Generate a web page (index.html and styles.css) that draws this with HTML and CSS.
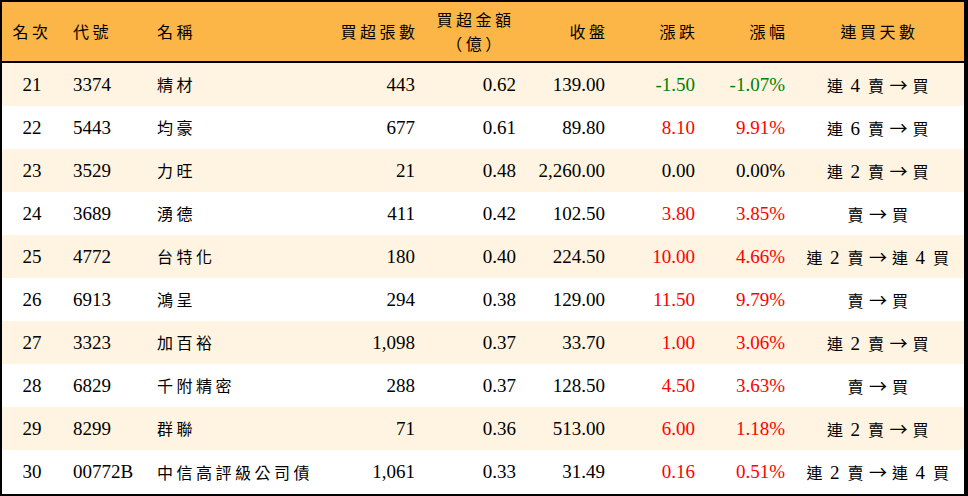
FILE: index.html
```html
<!DOCTYPE html>
<html lang="zh-Hant">
<head>
<meta charset="utf-8">
<title>買超排行</title>
<link rel="stylesheet" href="styles.css">
</head>
<body>
<table class="rank">
  <colgroup>
    <col class="w1"><col class="w2"><col class="w3"><col class="w4"><col class="w5"><col class="w6"><col class="w7"><col class="w8"><col class="w9">
  </colgroup>
  <thead>
    <tr>
      <th class="c"><span class="zh">名次</span></th>
      <th class="l"><span class="zh">代號</span></th>
      <th class="l l3"><span class="zh">名稱</span></th>
      <th class="r"><span class="zh rz">買超張數</span></th>
      <th class="c"><div class="zh ln">買超金額</div><div class="zh ln">（億）</div></th>
      <th class="r"><span class="zh rz">收盤</span></th>
      <th class="r"><span class="zh rz">漲跌</span></th>
      <th class="r"><span class="zh rz">漲幅</span></th>
      <th class="c"><span class="zh">連買天數</span></th>
    </tr>
  </thead>
  <tbody>
    <tr class="alt"><td class="c">21</td><td class="l">3374</td><td class="l l3"><span class="zh">精材</span></td><td class="r">443</td><td class="r">0.62</td><td class="r">139.00</td><td class="r dn">-1.50</td><td class="r dn">-1.07%</td><td class="c"><span class="zh">連</span><span class="n">4</span><span class="zh">賣</span><span class="ar">→</span><span class="zh">買</span></td></tr>
    <tr><td class="c">22</td><td class="l">5443</td><td class="l l3"><span class="zh">均豪</span></td><td class="r">677</td><td class="r">0.61</td><td class="r">89.80</td><td class="r up">8.10</td><td class="r up">9.91%</td><td class="c"><span class="zh">連</span><span class="n">6</span><span class="zh">賣</span><span class="ar">→</span><span class="zh">買</span></td></tr>
    <tr class="alt"><td class="c">23</td><td class="l">3529</td><td class="l l3"><span class="zh">力旺</span></td><td class="r">21</td><td class="r">0.48</td><td class="r">2,260.00</td><td class="r">0.00</td><td class="r">0.00%</td><td class="c"><span class="zh">連</span><span class="n">2</span><span class="zh">賣</span><span class="ar">→</span><span class="zh">買</span></td></tr>
    <tr><td class="c">24</td><td class="l">3689</td><td class="l l3"><span class="zh">湧德</span></td><td class="r">411</td><td class="r">0.42</td><td class="r">102.50</td><td class="r up">3.80</td><td class="r up">3.85%</td><td class="c"><span class="zh">賣</span><span class="ar">→</span><span class="zh">買</span></td></tr>
    <tr class="alt"><td class="c">25</td><td class="l">4772</td><td class="l l3"><span class="zh">台特化</span></td><td class="r">180</td><td class="r">0.40</td><td class="r">224.50</td><td class="r up">10.00</td><td class="r up">4.66%</td><td class="c"><span class="zh">連</span><span class="n">2</span><span class="zh">賣</span><span class="ar">→</span><span class="zh">連</span><span class="n">4</span><span class="zh">買</span></td></tr>
    <tr><td class="c">26</td><td class="l">6913</td><td class="l l3"><span class="zh">鴻呈</span></td><td class="r">294</td><td class="r">0.38</td><td class="r">129.00</td><td class="r up">11.50</td><td class="r up">9.79%</td><td class="c"><span class="zh">賣</span><span class="ar">→</span><span class="zh">買</span></td></tr>
    <tr class="alt"><td class="c">27</td><td class="l">3323</td><td class="l l3"><span class="zh">加百裕</span></td><td class="r">1,098</td><td class="r">0.37</td><td class="r">33.70</td><td class="r up">1.00</td><td class="r up">3.06%</td><td class="c"><span class="zh">連</span><span class="n">2</span><span class="zh">賣</span><span class="ar">→</span><span class="zh">買</span></td></tr>
    <tr><td class="c">28</td><td class="l">6829</td><td class="l l3"><span class="zh">千附精密</span></td><td class="r">288</td><td class="r">0.37</td><td class="r">128.50</td><td class="r up">4.50</td><td class="r up">3.63%</td><td class="c"><span class="zh">賣</span><span class="ar">→</span><span class="zh">買</span></td></tr>
    <tr class="alt"><td class="c">29</td><td class="l">8299</td><td class="l l3"><span class="zh">群聯</span></td><td class="r">71</td><td class="r">0.36</td><td class="r">513.00</td><td class="r up">6.00</td><td class="r up">1.18%</td><td class="c"><span class="zh">連</span><span class="n">2</span><span class="zh">賣</span><span class="ar">→</span><span class="zh">買</span></td></tr>
    <tr><td class="c">30</td><td class="l">00772B</td><td class="l l3"><span class="zh">中信高評級公司債</span></td><td class="r">1,061</td><td class="r">0.33</td><td class="r">31.49</td><td class="r up">0.16</td><td class="r up">0.51%</td><td class="c"><span class="zh">連</span><span class="n">2</span><span class="zh">賣</span><span class="ar">→</span><span class="zh">連</span><span class="n">4</span><span class="zh">買</span></td></tr>
  </tbody>
</table>
</body>
</html>
```

FILE: styles.css
```css
html, body {
  margin: 0;
  padding: 0;
  background: #ffffff;
}

.rank {
  width: 968px;
  height: 496px;
  border-collapse: separate;
  border-spacing: 0;
  table-layout: fixed;
  border-style: solid;
  border-color: #000000;
  border-width: 2px 4px 2px 2px;
  font-family: "Liberation Serif", "Times New Roman", serif;
  font-size: 19px;
  color: #000000;
  box-sizing: border-box;
}

.w1 { width: 60px; }
.w2 { width: 83px; }
.w3 { width: 175px; }
.w4 { width: 105px; }
.w5 { width: 101px; }
.w6 { width: 89px; }
.w7 { width: 90px; }
.w8 { width: 90px; }
.w9 { width: 169px; }

.rank th {
  background: #fbb647;
  height: 59px;
  padding: 0;
  font-weight: normal;
  line-height: 21px;
  border-bottom: 2px solid #000000;
  vertical-align: middle;
}

.ln {
  line-height: 23.5px;
}

.rank td {
  height: 43px;
  padding: 0;
  line-height: 22px;
  vertical-align: middle;
  white-space: nowrap;
}

.rank tbody tr:last-child td {
  height: 44px;
}

.rank tr.alt td {
  background: #fef4e1;
}

.zh {
  font-family: "Noto Sans CJK TC", "Noto Sans CJK SC", sans-serif;
  font-size: 16px;
  letter-spacing: 3.5px;
}

.rz {
  margin-right: -3.5px;
}

.c { text-align: center; }
.l { text-align: left; padding-left: 11px !important; }
.l3 { padding-left: 12px !important; }
.r { text-align: right; padding-right: 10px !important; }

.up { color: #ff0000; }
.dn { color: #008000; }

.n {
  margin: 0 8px 0 4px;
}

.ar {
  margin: 0 5px 0 2px;
  font-family: "Noto Sans CJK TC", sans-serif;
  font-size: 18px;
}
```
